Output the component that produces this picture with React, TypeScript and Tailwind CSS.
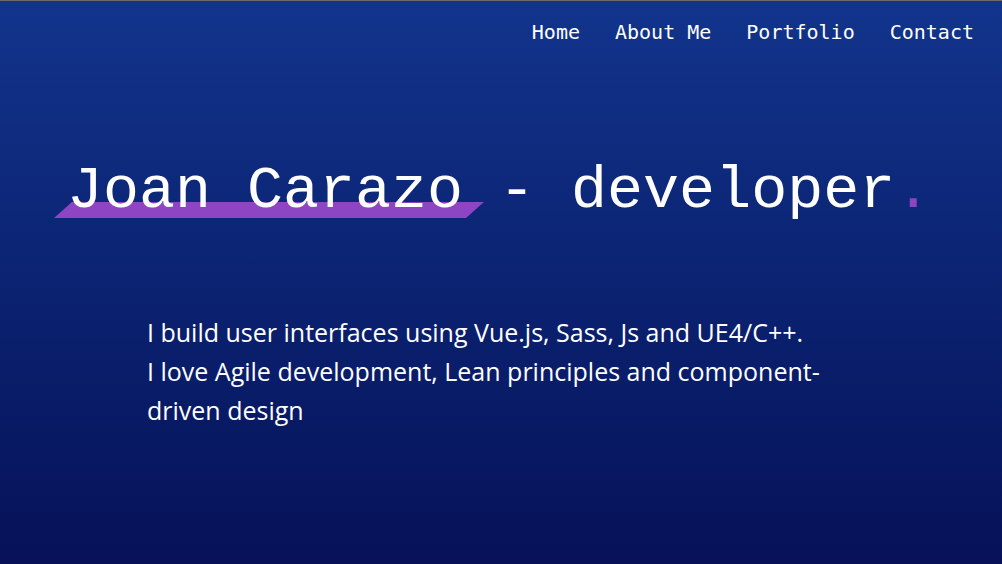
export default function App() {
  return (
    <div className="w-[1002px] h-[564px] overflow-hidden border-t border-[#6b6b6b] bg-gradient-to-b from-[#12348c] to-[#061158] text-white">
      <nav className="flex justify-end gap-[35px] pt-[19px] pr-[28px] font-['DejaVu_Sans_Mono',monospace] text-[20px] leading-[24px]">
        <a>Home</a>
        <a>About Me</a>
        <a>Portfolio</a>
        <a>Contact</a>
      </nav>

      <h1 className="mt-[112px] pl-[67px] font-['Liberation_Mono',monospace] text-[60px] leading-[70px] whitespace-nowrap">
        <span className="relative inline-block">
          <span className="absolute left-[-4px] top-[46px] w-[412px] h-[16px] bg-[#8e45c3] -skew-x-[48deg]"></span>
          <span className="relative">Joan Carazo</span>
        </span>{" "}
        - developer<span className="text-[#8e45c3]">.</span>
      </h1>

      <p className="mt-[87px] ml-[147px] w-[700px] font-['Open_Sans',sans-serif] text-[25px] leading-[39px]">
        I build user interfaces using Vue.js, Sass, Js and UE4/C++.
        <br />
        I love Agile development, Lean principles and component-driven design
      </p>
    </div>
  );
}
